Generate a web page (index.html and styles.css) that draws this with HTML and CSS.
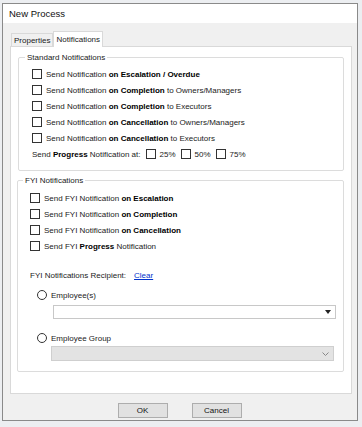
FILE: index.html
```html
<!DOCTYPE html>
<html>
<head>
<meta charset="utf-8">
<link rel="stylesheet" href="styles.css">
</head>
<body>
<div class="dialog">
  <div class="titlebar">New Process</div>
  <div class="body">
    <div class="tabs">
      <div class="tab">Properties</div>
      <div class="tab active">Notifications</div>
    </div>
    <div class="panel">
      <fieldset class="group std">
        <legend>Standard Notifications</legend>
        <div class="row"><span class="cb"></span><span class="t">Send Notification&nbsp;</span><b>on Escalation / Overdue</b></div>
        <div class="row"><span class="cb"></span><span class="t">Send Notification&nbsp;</span><b>on Completion</b><span class="t">&nbsp;to Owners/Managers</span></div>
        <div class="row"><span class="cb"></span><span class="t">Send Notification&nbsp;</span><b>on Completion</b><span class="t">&nbsp;to Executors</span></div>
        <div class="row"><span class="cb"></span><span class="t">Send Notification&nbsp;</span><b>on Cancellation</b><span class="t">&nbsp;to Owners/Managers</span></div>
        <div class="row"><span class="cb"></span><span class="t">Send Notification&nbsp;</span><b>on Cancellation</b><span class="t">&nbsp;to Executors</span></div>
        <div class="row"><span class="t">Send&nbsp;</span><b>Progress</b><span class="t">&nbsp;Notification at:</span>
          <span class="pct"><span class="cb"></span><span class="t">25%</span></span>
          <span class="pct"><span class="cb"></span><span class="t">50%</span></span>
          <span class="pct"><span class="cb"></span><span class="t">75%</span></span>
        </div>
      </fieldset>
      <fieldset class="group fyi">
        <legend>FYI Notifications</legend>
        <div class="row"><span class="cb"></span><span class="t">Send FYI Notification&nbsp;</span><b>on Escalation</b></div>
        <div class="row"><span class="cb"></span><span class="t">Send FYI Notification&nbsp;</span><b>on Completion</b></div>
        <div class="row"><span class="cb"></span><span class="t">Send FYI Notification&nbsp;</span><b>on Cancellation</b></div>
        <div class="row"><span class="cb"></span><span class="t">Send FYI&nbsp;</span><b>Progress</b><span class="t">&nbsp;Notification</span></div>
        <div class="recipient"><span class="t">FYI Notifications Recipient:</span><a class="clear" href="#">Clear</a></div>
        <div class="radio-row"><span class="rb"></span><span class="t">Employee(s)</span></div>
        <div class="combo"><svg width="6" height="4" viewBox="0 0 6 4"><path d="M0 0H6L3 4Z" fill="#222"/></svg></div>
        <div class="radio-row second"><span class="rb"></span><span class="t">Employee Group</span></div>
        <div class="combo disabled"><svg width="7" height="4" viewBox="0 0 7 4"><path d="M0.5 0.5L3.5 3.5L6.5 0.5" fill="none" stroke="#888" stroke-width="1"/></svg></div>
      </fieldset>
    </div>
    <div class="buttons">
      <div class="btn">OK</div>
      <div class="btn">Cancel</div>
    </div>
  </div>
</div>
</body>
</html>
```
FILE: styles.css
```css
html, body {
  margin: 0;
  padding: 0;
}
body {
  width: 362px;
  height: 427px;
  background: #eceef1;
  font-family: "Liberation Sans", Arial, sans-serif;
  font-size: 8px;
  color: #222;
  overflow: hidden;
  padding-top: 3px;
  padding-left: 2px;
  box-sizing: border-box;
}
.dialog {
  width: 356px;
  height: 418px;
  border: 1px solid #8a8a8a;
  box-sizing: border-box;
  background: #f0f0f0;
  display: flex;
  flex-direction: column;
}
.titlebar {
  height: 19px;
  background: #fff;
  font-size: 9.5px;
  color: #111;
  padding-left: 6px;
  line-height: 19px;
}
.body {
  flex: 1;
  padding: 7px 4px 0 7px;
  display: flex;
  flex-direction: column;
}
.tabs {
  display: flex;
  align-items: flex-end;
  height: 16px;
  padding-left: 1px;
}
.tab {
  height: 13px;
  line-height: 13px;
  padding: 0 2px;
  border: 1px solid #d9d9d9;
  border-bottom: none;
  background: #f0f0f0;
  box-sizing: border-box;
  color: #222;
}
.tab.active {
  height: 16px;
  background: #fff;
  border-color: #d9d9d9;
  margin-bottom: -1px;
  position: relative;
  z-index: 1;
  padding: 1px 2px 0;
}
.panel {
  height: 348px;
  width: 342px;
  background: #fff;
  border: 1px solid #d9d9d9;
  box-sizing: border-box;
  padding: 6px 7px 0 7px;
  display: flex;
  flex-direction: column;
}
.t {
  color: #222;
}
.group {
  margin: 0;
  border: 1px solid #dcdcdc;
  border-radius: 2px;
  padding: 0 0 0 13px;
}
.group legend {
  padding: 0 2px;
  margin-left: -7px;
  font-size: 8px;
  color: #222;
}
.std {
  height: 118px;
  box-sizing: border-box;
  padding-top: 4px;
}
.fyi {
  margin-top: 5px;
  margin-left: -1px;
  height: 196px;
  box-sizing: border-box;
  padding-top: 5px;
  padding-left: 12px;
}
.row {
  height: 16px;
  display: flex;
  align-items: center;
  white-space: nowrap;
}
.row b {
  color: #000;
}
.cb {
  width: 10px;
  height: 10px;
  border: 1px solid #333;
  box-sizing: border-box;
  background: #fff;
  margin-right: 4px;
  flex: none;
}
.pct {
  display: flex;
  align-items: center;
  margin-left: 5px;
}
.recipient {
  margin-top: 15px;
  height: 12px;
  display: flex;
  align-items: center;
}
.clear {
  color: #0033cc;
  margin-left: 8px;
}
.radio-row {
  margin-top: 8px;
  margin-left: 7px;
  display: flex;
  align-items: center;
  height: 12px;
}
.radio-row.second {
  margin-top: 13px;
}
.rb {
  width: 10px;
  height: 10px;
  border: 1px solid #333;
  border-radius: 50%;
  box-sizing: border-box;
  margin-right: 4px;
}
.combo {
  margin-top: 4px;
  margin-left: 23px;
  width: 283px;
  height: 14px;
  border: 1px solid #c8c8c8;
  box-sizing: border-box;
  background: #fff;
  display: flex;
  align-items: center;
  justify-content: flex-end;
  padding-right: 4px;
}
.combo.disabled {
  margin-top: 2px;
  margin-left: 21px;
  height: 15px;
  background: #e3e3e3;
  border-color: #cfcfcf;
}
.buttons {
  display: flex;
  justify-content: center;
  gap: 24px;
  margin-top: 9px;
  padding-right: 4px;
}
.btn {
  width: 50px;
  height: 15px;
  box-sizing: border-box;
  border: 1px solid #adadad;
  background: #e1e1e1;
  text-align: center;
  line-height: 13px;
  color: #111;
}
```
